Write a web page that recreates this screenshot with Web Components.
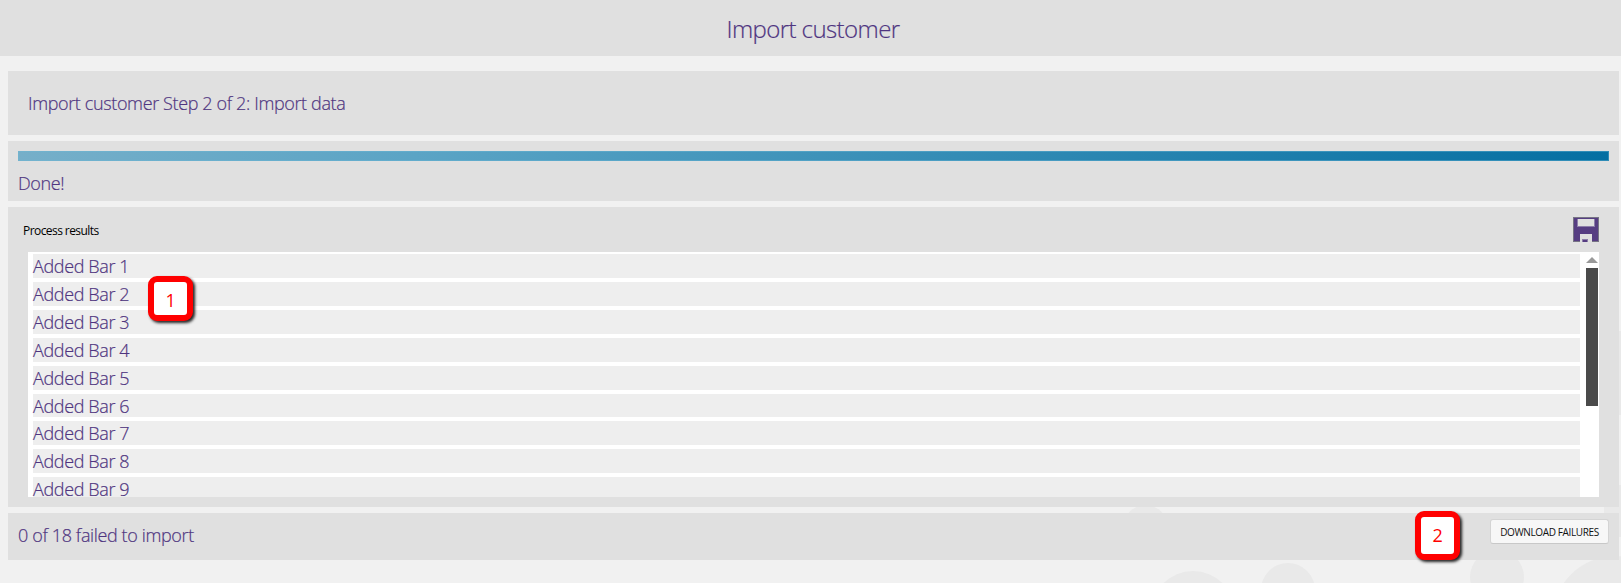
<!DOCTYPE html>
<html lang="en">
<head>
<meta charset="utf-8">
<title>Import customer</title>
<style>
  body {
    margin: 0;
    height: 583px;
    overflow: hidden;
    background: #f1f1f1;
    color: #4f3580;
    font: 300 18px/24px "Open Sans", "Noto Sans", sans-serif;
    letter-spacing: -0.37px;
    -webkit-text-stroke: 0.2px;
  }
</style>
</head>
<body>
<import-page></import-page>
<script>
// Decorative shapes behind the panels
class PageBackdrop extends HTMLElement {
  constructor() {
    super();
    this.attachShadow({ mode: 'open' });
    this.shadowRoot.innerHTML = `
      <style>
        :host { position: absolute; inset: 0; z-index: -1; }
        svg { display: block; }
      </style>
      <svg width="1621" height="583" fill="#e9e9e9">
        <circle cx="1145.500" cy="527" r="22"/>
        <circle cx="1193" cy="613" r="42"/>
        <circle cx="1288" cy="590" r="27"/>
        <circle cx="1497" cy="577" r="27"/>
        <circle cx="1615" cy="618" r="62"/>
        <rect x="1604" y="331" width="17" height="84"/>
        <rect x="1604" y="485" width="17" height="52"/>
      </svg>`;
  }
}
customElements.define('page-backdrop', PageBackdrop);

class PageHeader extends HTMLElement {
  constructor() {
    super();
    this.attachShadow({ mode: 'open' });
    this.shadowRoot.innerHTML = `
      <style>
        :host {
          display: flex;
          justify-content: center;
          box-sizing: border-box;
          height: 56px;
          padding-left: 5px;
          background: #e0e0e0;
          font-size: 24px;
          line-height: 58px;
          letter-spacing: -0.58px;
        }
      </style>
      <slot></slot>`;
  }
}
customElements.define('page-header', PageHeader);

class UiPanel extends HTMLElement {
  constructor() {
    super();
    this.attachShadow({ mode: 'open' });
    this.shadowRoot.innerHTML = `
      <style>
        :host {
          display: block;
          box-sizing: border-box;
          background: #e0e0e0;
        }
      </style>
      <slot></slot>`;
  }
}
customElements.define('ui-panel', UiPanel);

class ProgressBar extends HTMLElement {
  constructor() {
    super();
    this.attachShadow({ mode: 'open' });
    this.shadowRoot.innerHTML = `
      <style>
        :host {
          display: block;
          box-sizing: border-box;
          height: 10px;
          background: linear-gradient(90deg, #76afc9, #5ba4c5 25%, #056fa2);
          box-shadow: inset 0 0 0 1px rgba(110, 185, 215, .4);
        }
      </style>`;
  }
}
customElements.define('progress-bar', ProgressBar);

class SaveIcon extends HTMLElement {
  constructor() {
    super();
    this.attachShadow({ mode: 'open' });
    this.shadowRoot.innerHTML = `
      <style>
        :host { display: block; width: 26px; height: 25px; }
        svg { display: block; }
      </style>
      <svg width="26" height="25" shape-rendering="crispEdges">
        <rect width="26" height="25" fill="#777485"/>
        <rect x="1" y="1" width="24" height="23" fill="#563d82"/>
        <rect x="4" y="2" width="18" height="8" fill="#8d7eaa"/>
        <rect x="5" y="2" width="16" height="7" fill="#e0e0e0"/>
        <rect x="7" y="17" width="12" height="8" fill="#e0e0e0"/>
        <rect x="9" y="22" width="6" height="3" fill="#8d7eaa"/>
        <rect x="10" y="23" width="4" height="2" fill="#563d82"/>
      </svg>`;
  }
}
customElements.define('save-icon', SaveIcon);

class ResultList extends HTMLElement {
  constructor() {
    super();
    this.attachShadow({ mode: 'open' });
    this.shadowRoot.innerHTML = `
      <style>
        :host {
          display: flex;
          box-sizing: border-box;
          height: 245px;
          padding: 2px 1px 0 5px;
          background: #fff;
          overflow: hidden;
        }
        .rows {
          flex: 1;
          display: flex;
          flex-direction: column;
          gap: 4px;
        }
        .scroll {
          display: flex;
          flex-direction: column;
          gap: 5px;
          width: 12px;
          margin-left: 6px;
          padding-top: 3px;
        }
        .thumb { height: 138px; background: #4a4a4a; }
      </style>
      <div class="rows"><slot></slot></div>
      <div class="scroll">
        <svg width="12" height="6"><path d="M6 0L12 6H0Z" fill="#999"/></svg>
        <div class="thumb"></div>
      </div>`;
  }
}
customElements.define('result-list', ResultList);

class ResultRow extends HTMLElement {
  constructor() {
    super();
    this.attachShadow({ mode: 'open' });
    this.shadowRoot.innerHTML = `
      <style>
        :host {
          display: block;
          flex: none;
          height: 23.92px;
          background: #eee;
          line-height: 25px;
        }
      </style>
      <slot></slot>`;
  }
}
customElements.define('result-row', ResultRow);

class UiButton extends HTMLElement {
  constructor() {
    super();
    this.attachShadow({ mode: 'open' });
    this.shadowRoot.innerHTML = `
      <style>
        :host { display: block; }
        button {
          display: block;
          width: 119px;
          height: 25px;
          padding: 0;
          border: 1px solid #d4d4d4;
          border-bottom-color: #c8c8c8;
          border-radius: 3px;
          background: #f7f7f7;
          color: #111;
          font: 400 10px/24px "Open Sans", sans-serif;
          letter-spacing: -0.37px;
          white-space: nowrap;
          -webkit-text-stroke: 0;
        }
      </style>
      <button><slot></slot></button>`;
  }
}
customElements.define('ui-button', UiButton);

// Numbered marker that floats over the page
class CalloutMark extends HTMLElement {
  constructor() {
    super();
    this.attachShadow({ mode: 'open' });
    this.shadowRoot.innerHTML = `
      <style>
        :host {
          position: absolute;
          z-index: 5;
          display: flex;
          align-items: center;
          justify-content: center;
          box-sizing: border-box;
          width: 45px;
          border: 6px solid #f00;
          border-radius: 9px;
          background: #fff;
          color: #f00;
          font-size: 18px;
          font-weight: 400;
          box-shadow: 2px 2px 3px rgba(0, 0, 0, .85);
          -webkit-text-stroke: 0;
        }
      </style>
      <slot></slot>`;
  }
}
customElements.define('callout-mark', CalloutMark);

class ImportPage extends HTMLElement {
  constructor() {
    super();
    this.attachShadow({ mode: 'open' });
    let rows = '';
    for (let i = 1; i <= 9; i++) {
      rows += `<result-row><span>Added Bar ${i}</span></result-row>`;
    }
    this.shadowRoot.innerHTML = `
      <style>
        :host { display: block; position: relative; z-index: 0; height: 583px; }
        main {
          display: flex;
          flex-direction: column;
          gap: 6px;
          padding: 15px 2px 0 8px;
        }
        .step { height: 64px; padding: 20px; }
        .progress { height: 60px; padding: 10px; }
        .progress p { margin: 10px 0 0; }
        .results { height: 300px; padding: 10px 20px; }
        .bar {
          display: flex;
          justify-content: space-between;
          height: 35px;
        }
        .bar span {
          margin-left: -5px;
          color: #000;
          font-size: 12px;
          font-weight: 400;
          line-height: 28px;
          letter-spacing: -0.57px;
          -webkit-text-stroke: 0;
        }
        .summary {
          display: flex;
          justify-content: space-between;
          height: 47px;
          padding: 6px 10px;
        }
        .summary > span { line-height: 32px; }
        .first { left: 148px; top: 276px; height: 45px; padding-top: 2px; }
        .second { left: 1415px; top: 511px; height: 49px; padding-bottom: 1px; }
      </style>
      <page-backdrop></page-backdrop>
      <page-header><span>Import customer</span></page-header>
      <main>
        <ui-panel class="step"><span>Import customer Step 2 of 2: Import data</span></ui-panel>
        <ui-panel class="progress">
          <progress-bar></progress-bar>
          <p><span>Done!</span></p>
        </ui-panel>
        <ui-panel class="results">
          <div class="bar"><span>Process results</span><save-icon></save-icon></div>
          <result-list>${rows}</result-list>
        </ui-panel>
        <ui-panel class="summary">
          <span>0 of 18 failed to import</span>
          <ui-button>DOWNLOAD FAILURES</ui-button>
        </ui-panel>
      </main>
      <callout-mark class="first">1</callout-mark>
      <callout-mark class="second">2</callout-mark>`;
  }
}
customElements.define('import-page', ImportPage);
</script>
</body>
</html>
